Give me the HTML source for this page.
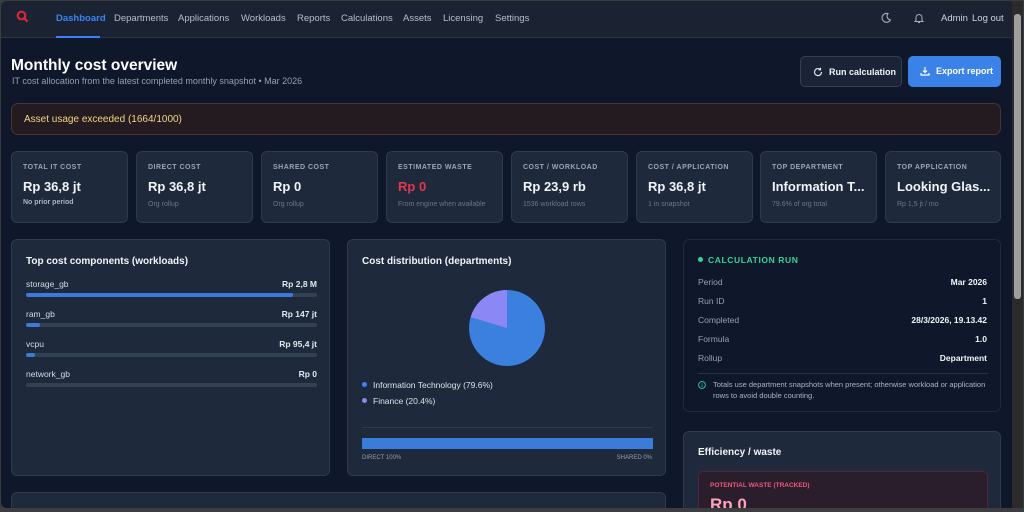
<!DOCTYPE html>
<html><head><meta charset="utf-8"><style>
*{box-sizing:border-box;margin:0;padding:0}
body{width:1024px;height:512px;overflow:hidden;background:#3a3b3d;font-family:"Liberation Sans",sans-serif;color:#e2e8f0;position:relative}
.app{position:absolute;left:1px;top:1px;width:1011px;height:507px;background:#0f172a;overflow:hidden;border-radius:6px 0 0 6px}
.nav{position:absolute;left:0;top:0;right:0;height:37px;background:#1b2333;border-bottom:1px solid #2a3446}
.nav a{position:absolute;top:12px;font-size:9.5px;color:#b4bfcd}
.a{position:absolute}
.card{position:absolute;background:#1e293b;border:1px solid #2e3a4f;border-radius:6px}
.kl{font-size:7px;font-weight:bold;letter-spacing:.5px;color:#9aa6b8;position:absolute;left:11px;top:12px}
.kv{font-size:13px;font-weight:bold;color:#f1f5f9;position:absolute;left:11px;top:27px;white-space:nowrap}
.ks{font-size:7px;color:#6b778a;position:absolute;left:11px;top:49px}
.bar{position:absolute;left:14px;width:291px;height:4px;background:#334155;border-radius:2px}
.bar i{display:block;height:4px;background:#3b7bd9;border-radius:2px}
.lb{position:absolute;left:14px;font-size:8.5px;color:#d5dce6}
.rv{position:absolute;right:12px;font-size:8.5px;font-weight:bold;color:#e2e8f0}
.rl{position:absolute;left:14px;font-size:8.5px;color:#94a0b2}
.rr{position:absolute;right:13px;font-size:8.5px;font-weight:bold;color:#f1f5f9}
</style></head><body>
<div class="app">
 <div class="nav">
  <svg class="a" style="left:15px;top:9px" width="13" height="13" viewBox="0 0 13 13"><circle cx="5.5" cy="5.5" r="3.8" fill="none" stroke="#d6263c" stroke-width="2.2"/><path d="M8 8l3.5 3.5" stroke="#d6263c" stroke-width="2.4"/></svg>
  <a style="left:55px;color:#3b82f6;font-weight:bold">Dashboard</a>
  <div class="a" style="left:55px;top:35px;width:44px;height:2px;background:#3b82f6"></div>
  <a style="left:113px">Departments</a><a style="left:177px">Applications</a><a style="left:240px">Workloads</a><a style="left:296px">Reports</a><a style="left:340px">Calculations</a><a style="left:402px">Assets</a><a style="left:442px">Licensing</a><a style="left:494px">Settings</a>
  <svg class="a" style="left:879px;top:11px" width="12" height="12" viewBox="0 0 12 12"><path d="M8 1.5A4.5 4.5 0 1 0 10.5 8 4 4 0 0 1 8 1.5z" fill="none" stroke="#a5afbd" stroke-width="1.1"/></svg>
  <svg class="a" style="left:912px;top:11px" width="12" height="12" viewBox="0 0 12 12"><path d="M3 8.5V5.5a3 3 0 0 1 6 0v3l1 1H2zM5 10.5h2" fill="none" stroke="#a5afbd" stroke-width="1"/></svg>
  <a style="left:940px;color:#cbd3de">Admin</a><a style="left:971px;color:#cbd3de">Log out</a>
 </div>
 <div class="a" style="left:10px;top:56px;font-size:15.5px;font-weight:bold;color:#fff">Monthly cost overview</div>
 <div class="a" style="left:11px;top:75px;font-size:9px;color:#94a0b2">IT cost allocation from the latest completed monthly snapshot • Mar 2026</div>
 <div class="a" style="left:799px;top:55px;width:102px;height:31px;background:#1a2436;border:1px solid #334155;border-radius:5px;font-size:9px;font-weight:bold;color:#f1f5f9;padding:10px 0 0 28px">Run calculation
  <svg class="a" style="left:12px;top:10px" width="10" height="10" viewBox="0 0 10 10"><path d="M8.5 5A3.5 3.5 0 1 1 7 2.2M7.5 0.8v2h-2" fill="none" stroke="#e2e8f0" stroke-width="1.2"/></svg></div>
 <div class="a" style="left:907px;top:55px;width:93px;height:31px;background:#3b82e8;border-radius:5px;font-size:9px;font-weight:bold;color:#fff;padding:10px 0 0 28px">Export report
  <svg class="a" style="left:12px;top:10px" width="10" height="10" viewBox="0 0 10 10"><path d="M5 1v5M3 4.5l2 2 2-2M1 7v2h8V7" fill="none" stroke="#fff" stroke-width="1.2"/></svg></div>
 <div class="a" style="left:10px;top:102px;width:990px;height:32px;background:#231b20;border:1px solid #4d3328;border-radius:7px;font-size:10px;color:#f4d58a;padding:10px 0 0 12px">Asset usage exceeded (1664/1000)</div>

 <div class="card" style="left:10px;top:150px;width:117px;height:72px"><div class="kl">TOTAL IT COST</div><div class="kv">Rp 36,8 jt</div><div class="ks" style="font-weight:bold;color:#aab4c2;top:47px">No prior period</div></div>
 <div class="card" style="left:135px;top:150px;width:117px;height:72px"><div class="kl">DIRECT COST</div><div class="kv">Rp 36,8 jt</div><div class="ks">Org rollup</div></div>
 <div class="card" style="left:260px;top:150px;width:117px;height:72px"><div class="kl">SHARED COST</div><div class="kv">Rp 0</div><div class="ks">Org rollup</div></div>
 <div class="card" style="left:385px;top:150px;width:117px;height:72px"><div class="kl">ESTIMATED WASTE</div><div class="kv" style="color:#e5364f">Rp 0</div><div class="ks">From engine when available</div></div>
 <div class="card" style="left:510px;top:150px;width:117px;height:72px"><div class="kl">COST / WORKLOAD</div><div class="kv">Rp 23,9 rb</div><div class="ks">1536 workload rows</div></div>
 <div class="card" style="left:635px;top:150px;width:117px;height:72px"><div class="kl">COST / APPLICATION</div><div class="kv">Rp 36,8 jt</div><div class="ks">1 in snapshot</div></div>
 <div class="card" style="left:759px;top:150px;width:117px;height:72px"><div class="kl">TOP DEPARTMENT</div><div class="kv">Information T...</div><div class="ks">79.6% of org total</div></div>
 <div class="card" style="left:884px;top:150px;width:116px;height:72px"><div class="kl">TOP APPLICATION</div><div class="kv">Looking Glas...</div><div class="ks">Rp 1,5 jt / mo</div></div>

 <div class="card" style="left:10px;top:238px;width:319px;height:237px">
  <div class="a" style="left:14px;top:16px;font-size:10px;font-weight:bold;color:#f1f5f9">Top cost components (workloads)</div>
  <div class="lb" style="top:39px">storage_gb</div><div class="rv" style="top:39px">Rp 2,8 M</div><div class="bar" style="top:53px"><i style="width:267px"></i></div>
  <div class="lb" style="top:69px">ram_gb</div><div class="rv" style="top:69px">Rp 147 jt</div><div class="bar" style="top:83px"><i style="width:14px"></i></div>
  <div class="lb" style="top:99px">vcpu</div><div class="rv" style="top:99px">Rp 95,4 jt</div><div class="bar" style="top:113px"><i style="width:9px"></i></div>
  <div class="lb" style="top:129px">network_gb</div><div class="rv" style="top:129px">Rp 0</div><div class="bar" style="top:143px"></div>
 </div>
 <div class="card" style="left:346px;top:238px;width:319px;height:237px">
  <div class="a" style="left:14px;top:16px;font-size:10px;font-weight:bold;color:#f1f5f9">Cost distribution (departments)</div>
  <svg class="a" style="left:120px;top:49px" width="78" height="78" viewBox="0 0 78 78"><circle cx="39" cy="39" r="38" fill="#3b7fdf"/><path d="M39 39V1A38 38 0 0 0 2.6 28.1z" fill="#8b87f5"/></svg>
  <div class="a" style="left:14px;top:140px;font-size:8.5px;color:#dbe2ea"><span style="display:inline-block;width:5px;height:5px;border-radius:50%;background:#3b82f6;margin-right:6px;vertical-align:1px"></span>Information Technology (79.6%)</div>
  <div class="a" style="left:14px;top:156px;font-size:8.5px;color:#dbe2ea"><span style="display:inline-block;width:5px;height:5px;border-radius:50%;background:#8b87f5;margin-right:6px;vertical-align:1px"></span>Finance (20.4%)</div>
  <div class="a" style="left:14px;top:187px;width:291px;height:1px;background:#2e3a4f"></div>
  <div class="a" style="left:14px;top:198px;width:291px;height:11px;background:#3b7bd9"></div>
  <div class="a" style="left:14px;top:215px;font-size:6px;color:#94a0b2">DIRECT 100%</div>
  <div class="a" style="right:13px;top:215px;font-size:6px;color:#94a0b2">SHARED 0%</div>
 </div>
 <div class="card" style="left:10px;top:491px;width:655px;height:40px"></div>

 <div class="card" style="left:682px;top:238px;width:318px;height:173px;background:#0f182a;border-color:#1f2a3c">
  <div class="a" style="left:14px;top:15px;font-size:8.5px;font-weight:bold;letter-spacing:.6px;color:#34d399"><span style="display:inline-block;width:5px;height:5px;border-radius:50%;background:#34d399;margin-right:5px;vertical-align:1px"></span>CALCULATION RUN</div>
  <div class="rl" style="top:37px">Period</div><div class="rr" style="top:37px">Mar 2026</div>
  <div class="rl" style="top:56px">Run ID</div><div class="rr" style="top:56px">1</div>
  <div class="rl" style="top:75px">Completed</div><div class="rr" style="top:75px">28/3/2026, 19.13.42</div>
  <div class="rl" style="top:94px">Formula</div><div class="rr" style="top:94px">1.0</div>
  <div class="rl" style="top:113px">Rollup</div><div class="rr" style="top:113px">Department</div>
  <div class="a" style="left:14px;top:133px;width:290px;height:1px;background:#263248"></div>
  <svg class="a" style="left:14px;top:141px" width="8" height="8" viewBox="0 0 8 8"><circle cx="4" cy="4" r="3.4" fill="none" stroke="#34d399" stroke-width=".9"/><path d="M4 3.5v2.3M4 2.2v.5" stroke="#34d399" stroke-width=".9"/></svg>
  <div class="a" style="left:29px;top:139px;width:275px;font-size:7.5px;line-height:11px;color:#aab4c2">Totals use department snapshots when present; otherwise workload or application rows to avoid double counting.</div>
 </div>
 <div class="card" style="left:682px;top:430px;width:318px;height:100px">
  <div class="a" style="left:14px;top:15px;font-size:10px;font-weight:bold;color:#f1f5f9">Efficiency / waste</div>
  <div class="a" style="left:14px;top:39px;width:290px;height:60px;background:#2a1e2c;border:1px solid #4f2738;border-radius:5px">
   <div class="a" style="left:11px;top:10px;font-size:6.5px;font-weight:bold;color:#f0577a">POTENTIAL WASTE (TRACKED)</div>
   <div class="a" style="left:11px;top:23px;font-size:17px;font-weight:bold;color:#fda4b8">Rp 0</div>
  </div>
 </div>
</div>
<div class="a" style="left:1012px;top:1px;width:11px;height:507px;background:#2b2b2b"></div>
<div class="a" style="left:1014px;top:14px;width:7px;height:285px;background:#9f9f9f;border-radius:3px"></div>
<div class="a" style="left:0;top:508px;width:1024px;height:4px;background:#3c3d40"></div>
</body></html>
